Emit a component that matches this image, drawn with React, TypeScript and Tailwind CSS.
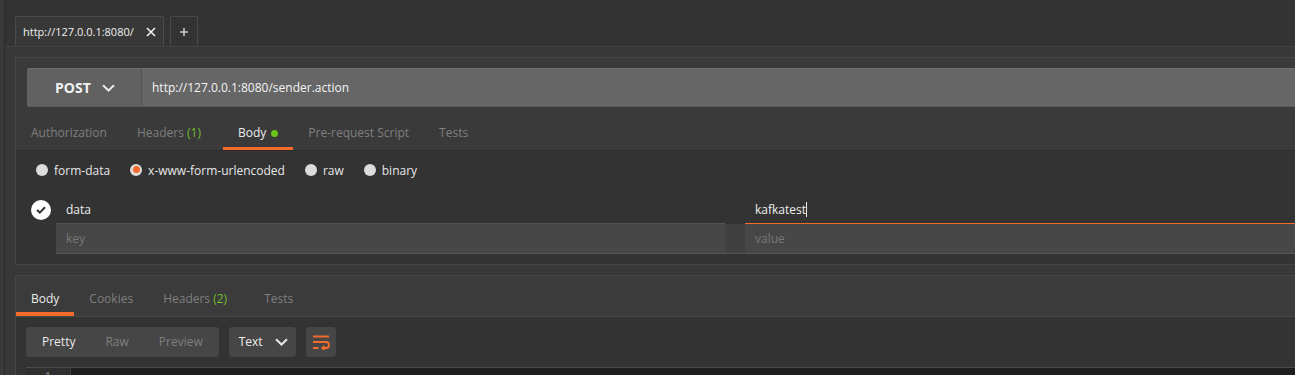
import React from "react";

const ORANGE = "#f26b2a";

const Chevron = () => (
  <svg width="13" height="8" viewBox="0 0 13 8">
    <path d="M1 1.2 L6.5 6.5 L12 1.2" fill="none" stroke="#e8e8e8" strokeWidth="2" />
  </svg>
);

const WrapIcon = () => (
  <svg width="18" height="15" viewBox="0 0 18 15">
    <g fill="none" stroke={ORANGE} strokeWidth="2">
      <path d="M1 1.5 H17" />
      <path d="M1 7 H14 A3 3 0 0 1 14 13 H10.5" />
      <path d="M12.5 11 L10.5 13 L12.5 15" />
      <path d="M1 13 H6.5" />
    </g>
  </svg>
);

function ReqTab({ label, active, extra, dot }: { label: string; active?: boolean; extra?: string; dot?: boolean }) {
  return (
    <div className={"relative h-full flex items-center pl-[15px] pt-[9px] " + (extra ? "pr-[22px]" : "pr-[15px]")}>
      <span className={active ? "text-[#ececec]" : "text-[#7f7f7f]"}>
        {label}
        {extra && <span className="text-[#6fbf2a]"> {extra}</span>}
      </span>
      {dot && <span className="ml-[5px] mt-[1px] w-[7px] h-[7px] rounded-full bg-[#6cc417]" />}
      {active && <div className="absolute left-0 right-0 bottom-0 h-[3px] bg-[#f26b2a]" />}
    </div>
  );
}

function ResTab({ label, active, extra }: { label: string; active?: boolean; extra?: string }) {
  return (
    <div className={"relative h-full flex items-center pl-[15px] pt-[6px] " + (extra ? "pr-[22px]" : "pr-[15px]")}>
      <span className={active ? "text-[#ececec]" : "text-[#7f7f7f]"}>
        {label}
        {extra && <span className="text-[#6fbf2a]"> {extra}</span>}
      </span>
      {active && <div className="absolute left-0 right-0 bottom-0 h-[4px] bg-[#f26b2a]" />}
    </div>
  );
}

function Radio({ label, checked }: { label: string; checked?: boolean }) {
  return (
    <div className="flex items-center gap-[6px]">
      <div className="w-[12px] h-[12px] rounded-full bg-[#dcdcdc] flex items-center justify-center mt-[-3px]">
        {checked && <div className="w-[7px] h-[7px] rounded-full bg-[#f26b2a]" />}
      </div>
      <span className="text-[#e6e6e6]">{label}</span>
    </div>
  );
}

export default function App() {
  return (
    <div className="w-[1295px] h-[375px] overflow-hidden flex bg-[#383838] font-['Open_Sans','Liberation_Sans',sans-serif] text-[12px] leading-none">
      <div className="w-[5px] shrink-0 bg-[#3a3a3a] border-r border-[#2b2b2b]" />
      <div className="flex-1 min-w-0 flex flex-col">
        {/* tab bar */}
        <div className="h-[47px] shrink-0 bg-[#333333] border-b border-[#414141] flex items-end pl-[10px] gap-[6px]">
          <div className="h-[30px] w-[149px] bg-[#383838] border border-b-0 border-[#4a4a4a] rounded-t-[2px] flex items-center pl-[7px]">
            <span className="text-[11px] text-[#f0f0f0]">http://127.0.0.1:8080/</span>
            <svg className="ml-[12px]" width="10" height="10" viewBox="0 0 10 10">
              <path d="M1 1 L9 9 M9 1 L1 9" stroke="#f0f0f0" strokeWidth="1.6" />
            </svg>
          </div>
          <div className="h-[30px] w-[28px] bg-[#333333] border border-b-0 border-[#4a4a4a] rounded-t-[2px] flex items-center justify-center">
            <svg width="8" height="8" viewBox="0 0 8 8">
              <path d="M4 0 V8 M0 4 H8" stroke="#c8c8c8" strokeWidth="1.6" />
            </svg>
          </div>
        </div>

        <div className="flex-1 min-h-0 pt-[10px] pl-[10px] flex flex-col">
          {/* request panel */}
          <div className="shrink-0 border-l border-t border-b border-[#454545] bg-[#333333] flex flex-col">
            <div className="bg-[#3a3a3a] pt-[10px] pl-[11px]">
              <div className="h-[39px] flex bg-[#666666] border-t border-[#6e6e6e] border-b border-b-[#5a5a5a] rounded-l-[2px]">
                <div className="w-[115px] shrink-0 flex items-center pl-[28px] gap-[11px] bg-[#616161] border-r border-[#555555] rounded-l-[2px]">
                  <span className="text-[14px] font-bold text-[#f2f2f2]">POST</span>
                  <Chevron />
                </div>
                <div className="flex items-center pl-[10px]">
                  <span className="text-[#f4f4f4]">http://127.0.0.1:8080/sender.action</span>
                </div>
              </div>
            </div>
            <div className="h-[44px] bg-[#3a3a3a] border-b border-[#2d2d2d] flex">
              <ReqTab label="Authorization" />
              <ReqTab label="Headers" extra="(1)" />
              <ReqTab label="Body" active dot />
              <ReqTab label="Pre-request Script" />
              <ReqTab label="Tests" />
            </div>
            <div className="pt-[12px] pb-[10px]">
              <div className="h-[16px] flex items-center pl-[20px] gap-[20px]">
                <Radio label="form-data" />
                <Radio label="x-www-form-urlencoded" checked />
                <Radio label="raw" />
                <Radio label="binary" />
              </div>
              <div className="mt-[17px]">
                <div className="h-[28px] flex">
                  <div className="w-[40px] shrink-0 flex items-center pl-[15px]">
                    <div className="w-[20px] h-[20px] rounded-full bg-white flex items-center justify-center">
                      <svg width="10" height="8" viewBox="0 0 10 8">
                        <path d="M1 4 L3.8 6.6 L9 1.2" fill="none" stroke="#333" strokeWidth="2" />
                      </svg>
                    </div>
                  </div>
                  <div className="w-[669px] shrink-0 border-b border-[#555555] flex items-center pl-[10px]">
                    <span className="text-[#eeeeee]">data</span>
                  </div>
                  <div className="w-[20px] shrink-0" />
                  <div className="flex-1 border-b border-[#f26b2a] flex items-center pl-[10px]">
                    <span className="text-[#eeeeee]">kafkatest</span>
                    <span className="w-[1px] h-[15px] bg-[#eeeeee]" />
                  </div>
                </div>
                <div className="h-[30px] flex">
                  <div className="w-[40px] shrink-0" />
                  <div className="flex-1 flex border-b border-[#555555]">
                    <div className="w-[669px] shrink-0 bg-[#474747] flex items-center pl-[10px]">
                      <span className="text-[#777777]">key</span>
                    </div>
                    <div className="w-[20px] shrink-0 bg-[#404040]" />
                    <div className="flex-1 bg-[#474747] flex items-center pl-[10px]">
                      <span className="text-[#777777]">value</span>
                    </div>
                  </div>
                </div>
              </div>
            </div>
          </div>

          {/* response panel */}
          <div className="mt-[10px] flex-1 border-l border-t border-[#454545] bg-[#333333] flex flex-col">
            <div className="h-[41px] shrink-0 bg-[#3b3b3b] border-b border-[#484848] flex">
              <ResTab label="Body" active />
              <ResTab label="Cookies" />
              <ResTab label="Headers" extra="(2)" />
              <ResTab label="Tests" />
            </div>
            <div className="pt-[10px] pb-[10px] pl-[10px] flex gap-[10px]">
              <div className="h-[30px] flex items-center bg-[#464646] rounded-[3px] pr-[16px]">
                <span className="px-[16px] text-[#ececec]">Pretty</span>
                <span className="px-[14px] text-[#7f7f7f]">Raw</span>
                <span className="pl-[16px] text-[#7f7f7f]">Preview</span>
              </div>
              <div className="h-[30px] w-[67px] flex items-center bg-[#464646] rounded-[3px] pl-[10px] gap-[12px]">
                <span className="text-[#ececec]">Text</span>
                <Chevron />
              </div>
              <div className="h-[30px] w-[30px] flex items-center justify-center bg-[#464646] rounded-[3px]">
                <WrapIcon />
              </div>
            </div>
            <div className="ml-[10px] flex-1 flex border-t border-[#4a4a4a]">
              <div className="w-[45px] bg-[#2f2f2f] border-r border-[#3e3e3e] flex justify-center pt-[3px]">
                <span className="text-[#8a8a8a]">1</span>
              </div>
              <div className="flex-1 bg-[#1e1e1e]" />
            </div>
          </div>
        </div>
      </div>
    </div>
  );
}
